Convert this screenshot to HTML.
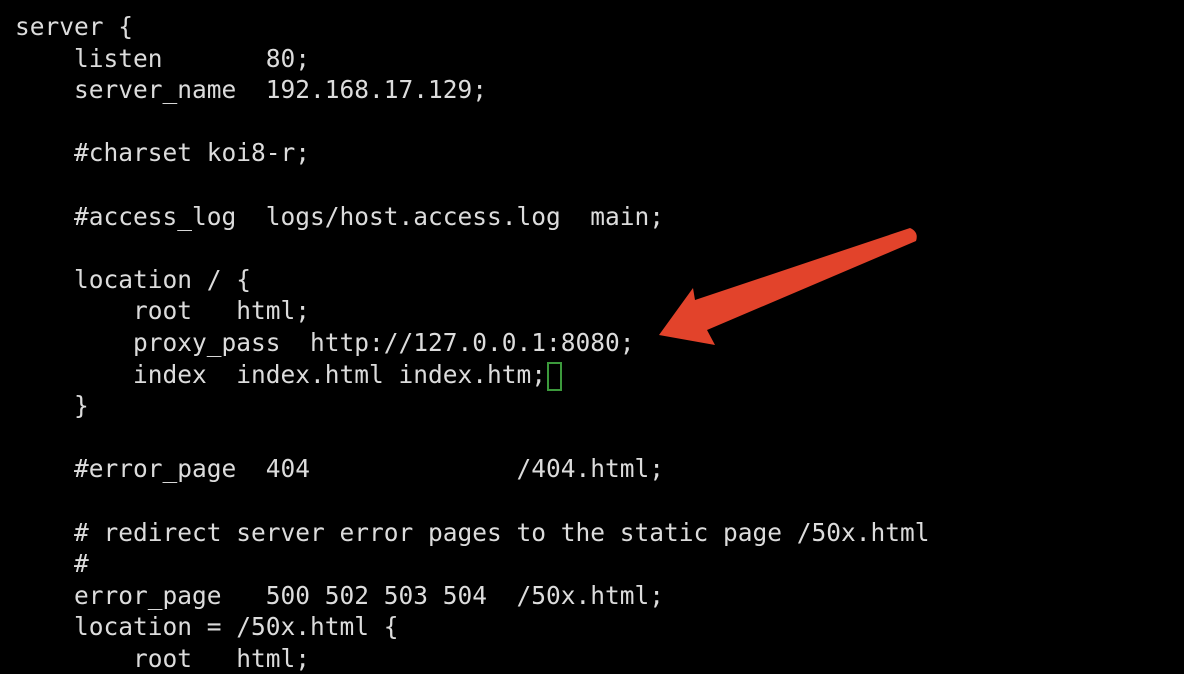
<!DOCTYPE html>
<html><head><style>
html,body{margin:0;padding:0;background:#000;width:1184px;height:654px;overflow:hidden}
pre{position:absolute;left:15px;top:11px;margin:0;font-family:"DejaVu Sans Mono","Liberation Mono",monospace;font-size:24.5px;line-height:31.6px;color:#dcdcdc}
.cur{position:absolute;left:547px;top:362px;width:11px;height:25px;border:2px solid #3c9a3c}
svg{position:absolute;left:0;top:0}
</style></head><body>
<pre>server {
    listen       80;
    server_name  192.168.17.129;

    #charset koi8-r;

    #access_log  logs/host.access.log  main;

    location / {
        root   html;
        proxy_pass  http://127.0.0.1:8080;
        index  index.html index.htm;
    }

    #error_page  404              /404.html;

    # redirect server error pages to the static page /50x.html
    #
    error_page   500 502 503 504  /50x.html;
    location = /50x.html {
        root   html;</pre>
<div class="cur"></div>
<svg width="1184" height="654"><path d="M659 335 L693 288 L695 300 L910 228 Q919 232 916 241 L707 330 L715 345 Z" fill="#e2432b"/></svg>
</body></html>
